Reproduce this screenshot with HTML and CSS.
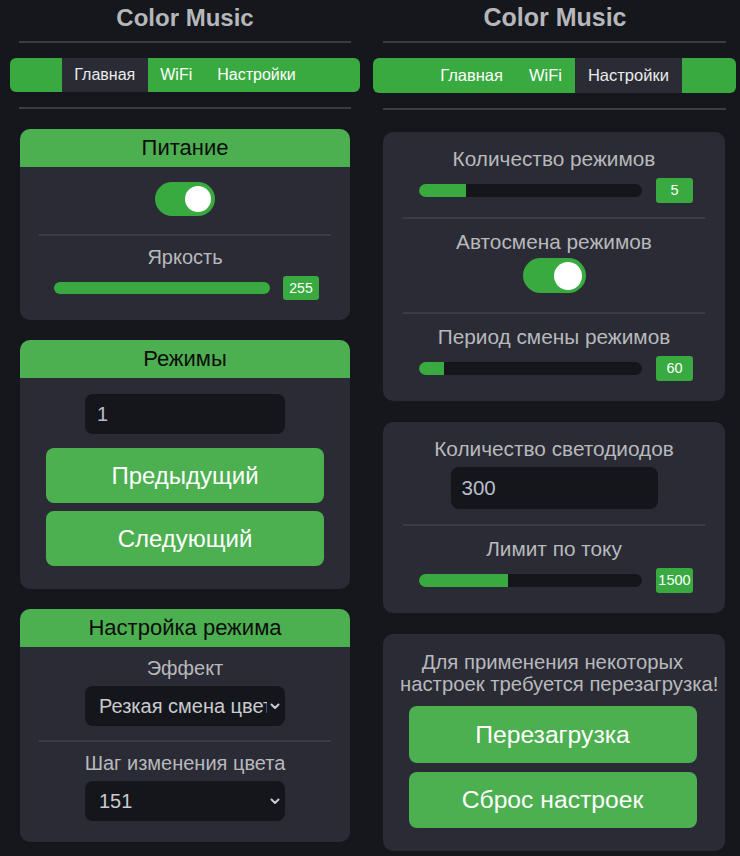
FILE: index.html
```html
<!DOCTYPE html>
<html lang="ru">
<head>
<meta charset="utf-8">
<title>Color Music</title>
<link rel="stylesheet" href="styles.css">
</head>
<body>
<div class="screens">
  <section class="screen screen--main">
    <h1 class="title">Color Music</h1>
    <hr class="rule rule--top">
    <nav class="tabs">
      <a class="tab tab--active">Главная</a>
      <a class="tab">WiFi</a>
      <a class="tab">Настройки</a>
    </nav>
    <hr class="rule rule--bottom">

    <div class="card">
      <div class="card__head">Питание</div>
      <div class="card__body card__body--power">
        <div class="toggle"><span class="toggle__knob"></span></div>
        <hr class="divider">
        <div class="label">Яркость</div>
        <div class="slider-row">
          <div class="slider"><div class="slider__fill" style="width:100%"></div></div>
          <span class="badge">255</span>
        </div>
      </div>
    </div>

    <div class="card">
      <div class="card__head">Режимы</div>
      <div class="card__body card__body--modes">
        <input class="input" type="text" value="1">
        <button class="btn">Предыдущий</button>
        <button class="btn">Следующий</button>
      </div>
    </div>

    <div class="card">
      <div class="card__head">Настройка режима</div>
      <div class="card__body card__body--effect">
        <div class="label">Эффект</div>
        <div class="select-wrap">
          <select class="select"><option>Резкая смена цвета</option></select>
          <svg class="select-wrap__arrow" width="10" height="7" viewBox="0 0 10 7"><path d="M1.5 1.5 L5 5 L8.5 1.5" fill="none" stroke="#c9cbd0" stroke-width="2" stroke-linecap="round" stroke-linejoin="round"/></svg>
        </div>
        <hr class="divider">
        <div class="label">Шаг изменения цвета</div>
        <div class="select-wrap">
          <select class="select"><option>151</option></select>
          <svg class="select-wrap__arrow" width="10" height="7" viewBox="0 0 10 7"><path d="M1.5 1.5 L5 5 L8.5 1.5" fill="none" stroke="#c9cbd0" stroke-width="2" stroke-linecap="round" stroke-linejoin="round"/></svg>
        </div>
      </div>
    </div>
  </section>

  <section class="screen screen--settings">
    <h1 class="title">Color Music</h1>
    <hr class="rule rule--top">
    <nav class="tabs">
      <a class="tab">Главная</a>
      <a class="tab">WiFi</a>
      <a class="tab tab--active">Настройки</a>
    </nav>
    <hr class="rule rule--bottom">

    <div class="card">
      <div class="card__body">
        <div class="label">Количество режимов</div>
        <div class="slider-row">
          <div class="slider"><div class="slider__fill" style="width:21%"></div></div>
          <span class="badge">5</span>
        </div>
        <hr class="divider">
        <div class="label">Автосмена режимов</div>
        <div class="toggle"><span class="toggle__knob"></span></div>
        <hr class="divider">
        <div class="label">Период смены режимов</div>
        <div class="slider-row">
          <div class="slider"><div class="slider__fill" style="width:11%"></div></div>
          <span class="badge">60</span>
        </div>
      </div>
    </div>

    <div class="card">
      <div class="card__body">
        <div class="label">Количество светодиодов</div>
        <input class="input" type="text" value="300">
        <hr class="divider">
        <div class="label">Лимит по току</div>
        <div class="slider-row">
          <div class="slider"><div class="slider__fill" style="width:40%"></div></div>
          <span class="badge">1500</span>
        </div>
      </div>
    </div>

    <div class="card">
      <div class="card__body card__body--reboot">
        <p class="note">Для применения некоторых<br>настроек требуется перезагрузка!</p>
        <button class="btn">Перезагрузка</button>
        <button class="btn">Сброс настроек</button>
      </div>
    </div>
  </section>
</div>
</body>
</html>
```

FILE: styles.css
```css
* { box-sizing: border-box; }

html, body {
  margin: 0;
  padding: 0;
  background: #15171c;
}

body {
  font-family: "Liberation Sans", Arial, sans-serif;
  color: #b8b9bc;
  width: 740px;
  height: 856px;
  overflow: hidden;
}

.screens {
  display: grid;
  grid-template-columns: 370px 370px;
}

.screen { display: flow-root; }

.title {
  margin: 0;
  text-align: center;
  font-weight: bold;
  color: #b6b7ba;
}

.rule {
  border: 0;
  height: 2px;
  background: #3b3d45;
  margin-bottom: 0;
}

.tabs {
  display: flex;
  justify-content: center;
  background: #39aa3f;
  border-radius: 6px;
  overflow: hidden;
}

.tab {
  color: #ffffff;
  display: block;
}

.tab--active {
  background: #2a2b35;
  color: #ececec;
}

.card {
  background: #2a2b35;
  border-radius: 10px;
  overflow: hidden;
}

.card__head {
  background: #4caf50;
  height: 38px;
  line-height: 38px;
  text-align: center;
  color: #0c0c0c;
  font-size: 22px;
}

.card__body {
  text-align: center;
}

.label {
  line-height: 22px;
  color: #b8b9bc;
  white-space: nowrap;
}

.divider {
  border: 0;
  height: 2px;
  background: #3b3d45;
  margin-bottom: 0;
  margin-left: 0;
  margin-right: 0;
}

.toggle {
  position: relative;
  margin-left: auto;
  margin-right: auto;
  background: #39aa3f;
}

.toggle__knob {
  position: absolute;
  top: 50%;
  background: #ffffff;
  border-radius: 50%;
}

.slider-row {
  display: flex;
  align-items: center;
}

.slider {
  flex: 1;
  background: #15161b;
  overflow: hidden;
}

.slider__fill {
  height: 100%;
  background: #39aa3f;
}

.badge {
  display: block;
  background: #39aa3f;
  color: #ffffff;
  border-radius: 3px;
  text-align: center;
}

.input {
  display: block;
  margin-left: auto;
  margin-right: auto;
  border: 0;
  outline: none;
  background: #15161b;
  border-radius: 8px;
  color: #b7bfcc;
  font-family: "Liberation Sans", Arial, sans-serif;
}

.btn {
  display: block;
  margin-left: auto;
  margin-right: auto;
  border: 0;
  background: #4caf50;
  color: #ffffff;
  border-radius: 8px;
  font-family: "Liberation Sans", Arial, sans-serif;
  padding: 0;
}

.select-wrap {
  position: relative;
  width: 200px;
  margin: 7px auto 0;
}

.select {
  display: block;
  appearance: none;
  -webkit-appearance: none;
  width: 200px;
  height: 40px;
  border: 0;
  outline: none;
  border-radius: 8px;
  background: #15161b;
  color: #c9cbd0;
  font-family: "Liberation Sans", Arial, sans-serif;
  font-size: 20px;
  padding: 0 18px 0 14px;
  white-space: nowrap;
  overflow: hidden;
}

.select-wrap__arrow {
  position: absolute;
  right: 5px;
  top: 17px;
}

.note {
  margin: 0;
  font-size: 20.3px;
  line-height: 21.5px;
  color: #b8b9bc;
  text-align: center;
  white-space: nowrap;
}

/* ---------- Left screen: Главная ---------- */

.screen--main .title {
  height: 36px;
  line-height: 36px;
  font-size: 24px;
}

.screen--main .rule {
  margin: 0 19px;
}

.screen--main .rule--top { margin-top: 5px; }
.screen--main .rule--bottom { margin-top: 15px; }

.screen--main .tabs {
  margin: 15px 10px 0;
  height: 34px;
}

.screen--main .tab {
  font-size: 16px;
  line-height: 34px;
  padding: 0 12.5px;
}

.screen--main .card {
  margin: 20px 20px 0;
}

.screen--main .card__body {
  padding: 0 19px;
}

.screen--main .card__body--power { padding-top: 15px; padding-bottom: 20px; }
.screen--main .card__body--modes { padding-top: 16px; padding-bottom: 23px; }
.screen--main .card__body--effect { padding-top: 10px; padding-bottom: 21px; }

.screen--main .label {
  font-size: 20px;
  margin-top: 10px;
}

.screen--main .label:first-child { margin-top: 0; }

.screen--main .toggle {
  width: 60px;
  height: 34px;
  border-radius: 17px;
}

.screen--main .toggle__knob {
  right: 4px;
  width: 26px;
  height: 26px;
  margin-top: -13px;
}

.screen--main .toggle + .divider { margin-top: 18px; }
.screen--main .select-wrap + .divider { margin-top: 14px; }

.screen--main .slider-row {
  margin-top: 8px;
  height: 24px;
  padding: 0 12px 0 15px;
  gap: 13px;
}

.screen--main .slider {
  height: 12px;
  border-radius: 6px;
}

.screen--main .badge {
  width: 36px;
  height: 24px;
  line-height: 24px;
  font-size: 14px;
}

.screen--main .input {
  width: 200px;
  height: 40px;
  font-size: 20px;
  padding: 0 12px;
}

.screen--main .btn {
  width: 278px;
  height: 55px;
  margin-top: 14px;
  font-size: 24px;
}

.screen--main .btn + .btn { margin-top: 8px; }

/* ---------- Right screen: Настройки ---------- */

.screen--settings .title {
  height: 34px;
  line-height: 34px;
  font-size: 25px;
}

.screen--settings .rule {
  margin-left: 13px;
  margin-right: 14px;
}

.screen--settings .rule--top { margin-top: 7px; }
.screen--settings .rule--bottom { margin-top: 15px; }

.screen--settings .tabs {
  margin: 15px 4px 0 3px;
  height: 35px;
}

.screen--settings .tab {
  font-size: 16.5px;
  line-height: 35px;
  padding: 0 13px;
}

.screen--settings .card {
  margin: 21px 15px 0 13px;
}

.screen--settings .card:first-of-type { margin-top: 22px; }

.screen--settings .card__body {
  padding: 16px 20px 20px;
}

.screen--settings .card__body--reboot {
  padding: 18px 20px 23px 17px;
}

.screen--settings .label {
  font-size: 20.8px;
  margin-top: 12px;
}

.screen--settings .label:first-child { margin-top: 0; }

.screen--settings .toggle {
  width: 63px;
  height: 35px;
  border-radius: 17.5px;
  margin-top: 5px;
}

.screen--settings .toggle__knob {
  right: 4px;
  width: 28px;
  height: 28px;
  margin-top: -14px;
}

.screen--settings .slider-row + .divider { margin-top: 14px; }
.screen--settings .toggle + .divider { margin-top: 19px; }
.screen--settings .input + .divider { margin-top: 15px; }

.screen--settings .slider-row {
  margin-top: 8px;
  height: 25px;
  padding: 0 12px 0 16px;
  gap: 14px;
}

.screen--settings .slider {
  height: 13px;
  border-radius: 6.5px;
}

.screen--settings .badge {
  width: 37px;
  height: 25px;
  line-height: 25px;
  font-size: 14.5px;
}

.screen--settings .input {
  width: 207px;
  height: 42px;
  margin-top: 7px;
  font-size: 20.5px;
  padding: 0 11px;
}

.screen--settings .btn {
  width: 288px;
  height: 57px;
  margin-top: 11px;
  font-size: 24.7px;
}

.screen--settings .btn + .btn {
  margin-top: 9px;
  height: 56px;
}
```
